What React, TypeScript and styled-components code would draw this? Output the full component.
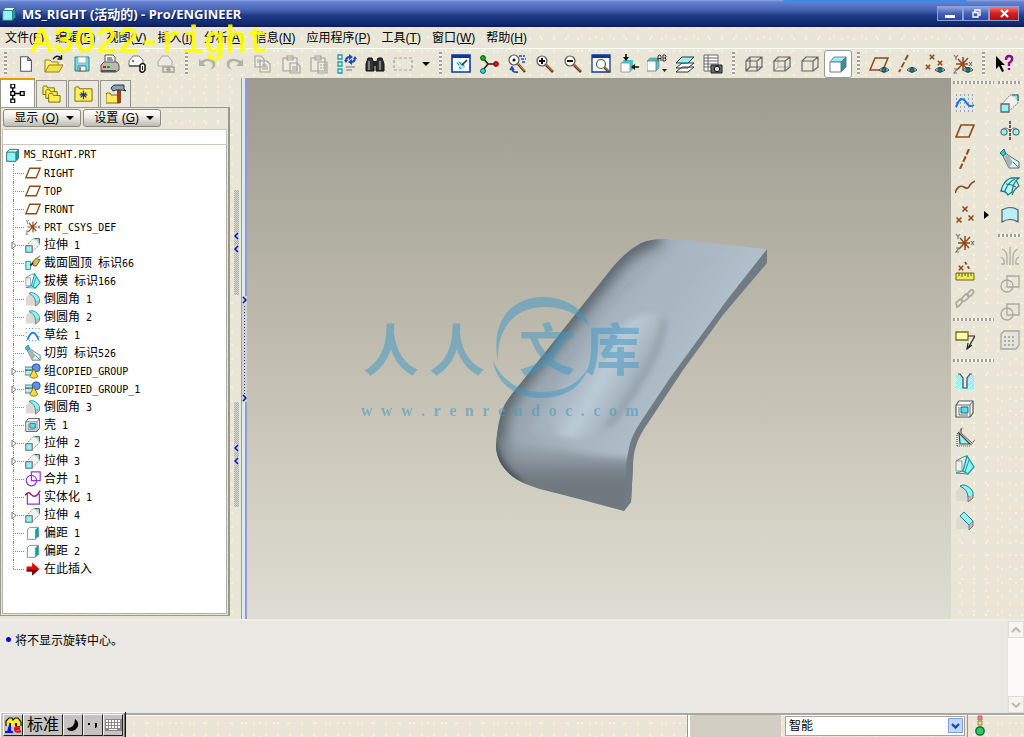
import React from 'react';
import styled, { createGlobalStyle, css } from 'styled-components';

const ui = '"Liberation Sans", "Noto Sans CJK SC", sans-serif';

const GlobalStyle = createGlobalStyle`
  *, *::before, *::after { box-sizing: border-box; }
  body { margin: 0; background: #e9e6d7; font-family: ${ui}; font-size: 12px; color: #000; overflow: hidden; }
  button, select { font: inherit; color: inherit; padding: 0; margin: 0; border: 0; background: none; }
  ul { list-style: none; margin: 0; padding: 0; }
  h1 { margin: 0; }
`;

const speckle = css`
  background-color: #e9e6d7;
  background-image:
    radial-gradient(circle at 2px 3px, #f7f4d4 0, #f7f4d4 1px, transparent 1px),
    radial-gradient(circle at 8px 9px, #f4f1d6 0, #f4f1d6 1px, transparent 1px);
  background-size: 12px 12px, 14px 14px;
`;

/* ---------- icon drawings, on a 20 x 20 grid ---------- */

const brown = '#8f4a1c';
const cyan = '#8ff4fa';
const teal = '#1d9aa3';
const grey = '#666';

const Eye = () => (
  <g>
    <path d="M10 16Q15 11 20 16Q15 20 10 16Z" fill="#eee" stroke="#444" />
    <circle cx="15" cy="16" r="2.3" fill="#127f87" stroke="#134" strokeWidth=".8" />
  </g>
);
const Lens = ({ x = 7, y = 7, r = 5 }) => (
  <g>
    <path d={`M${x + r - 1} ${y + r - 1}L18 18`} stroke="#6b3a1a" strokeWidth="2.6" />
    <path d={`M${x + r - 1} ${y + r - 1.5}L17.5 17`} stroke="#c79a6a" strokeWidth="1" />
    <circle cx={x} cy={y} r={r} fill="#f8f8f4" stroke="#555" strokeWidth="1.2" />
  </g>
);
const Crosses = ({ pts, s = 2.2 }: { pts: number[][]; s?: number }) => (
  <path
    d={pts.map(([x, y]) => `M${x - s} ${y - s}L${x + s} ${y + s}M${x + s} ${y - s}L${x - s} ${y + s}`).join('')}
    stroke={brown}
    strokeWidth="1.6"
  />
);
const Folder = ({ x = 0, y = 0, w = 12, h = 9 }) => (
  <path d={`M${x} ${y + h}V${y + 1}L${x + 1} ${y}H${x + 4}L${x + 5} ${y + 2}H${x + w}V${y + h}Z`} fill="#ffee55" stroke="#7a6a10" />
);
const csys = (
  <>
    <path d="M10 3V17M3 10H15M4 16L15 4M5 5L14 15" stroke={brown} strokeWidth="1.5" />
    <path d="M1 1L3 3.5L5 1M3 3.5V6M16 8L19 12M19 8L16 12M1 15H4L1 19H4" stroke="#777" strokeWidth="1.2" />
  </>
);

const icons: Record<string, React.ReactNode> = {
  newFile: <path d="M4 2H12L16 6V18H4ZM12 2V6H16" fill="#fff" stroke="#556" strokeWidth="1.2" />,
  open: (
    <>
      <path d="M1 18V6H6L8 8H14V11" fill="#fff27a" stroke="#94801b" />
      <path d="M1 18L5 11H19L15 18Z" fill="#f3e04b" stroke="#94801b" />
      <path d="M9 5Q13 0 17 4M17.5 1V5H13.5" stroke="#111" strokeWidth="1.4" fill="none" />
    </>
  ),
  save: (
    <>
      <path d="M3 3H17V17H3Z" fill="#6fdbe6" stroke="#2a7f93" />
      <path d="M6 3H14V9H6Z" fill="#fff" stroke="#9bb" />
      <path d="M6 12H14V17H6Z" fill="#f4f4f4" stroke="#577" />
      <path d="M8 13V17" stroke="#577" strokeWidth="1.6" />
    </>
  ),
  print: (
    <>
      <path d="M5 9V1H13L15 3V9" fill="#fff" stroke="#555" />
      <path d="M7 4H12M7 6H13" stroke="#333" />
      <path d="M1 11L4 8H17L19 11V16L16 18H1Z" fill="#b9b9b5" stroke="#555" />
      <path d="M3 13H6" stroke="#d11" strokeWidth="2" />
      <path d="M7 13H10" stroke="#0a0" strokeWidth="2" />
      <path d="M1 16H16V18H1Z" fill="#555" />
    </>
  ),
  mailAttach: (
    <>
      <path d="M1 7L5 2H11L15 6V12H1Z" fill="#fff" stroke="#777" />
      <path d="M1 12H12" stroke="#555" strokeWidth="1.5" />
      <path d="M4 7H6" stroke="#d11" strokeWidth="1.5" />
      <path d="M12 11Q15 8 17 11V16Q15 20 12 17Z" fill="#fff" stroke="#111" strokeWidth="1.5" />
      <path d="M14.500 12V16" stroke="#111" />
    </>
  ),
  mailLink: (
    <>
      <path d="M2 8L6 2H12L16 7V12H2Z" fill="#eceadf" stroke="#aaa" />
      <path d="M7 13H12V18H7ZM13 13H18V18H13ZM10 15.5H15" fill="none" stroke="#a5a49c" strokeWidth="1.5" />
    </>
  ),
  undo: <path d="M2 5V12H9L6 9Q12 5 15 9Q17 12 13 16Q20 13 18 8Q14 2 4 7Z" fill="#b3b1a6" />,
  redo: <path d="M18 5V12H11L14 9Q8 5 5 9Q3 12 7 16Q0 13 2 8Q6 2 16 7Z" fill="#b3b1a6" />,
  copy: (
    <path d="M2 2H8L11 5V13H2ZM7 7H14L17 10V18H7ZM4 6H8M4 8H7M9 11H14M9 13H15M9 15H15" fill="#edeadf" stroke="#a3a198" strokeWidth="1.1" />
  ),
  paste: (
    <path d="M2 4H16V17H2ZM6 2H12V6H6ZM9 9H16L19 12V19H9ZM11 13H16M11 15H17M11 17H17" fill="#edeadf" stroke="#a3a198" strokeWidth="1.1" />
  ),
  pasteSpecial: (
    <path d="M2 4H16V17H2ZM6 2H12V6H6ZM9 8H18V19H9ZM11 11H13M11 14H13M11 17H13M14 11H17M14 14H17M14 17H17" fill="#edeadf" stroke="#a3a198" strokeWidth="1.1" />
  ),
  regenerate: (
    <>
      <path d="M1 1H5V5H1ZM1 8H5V12H1ZM1 15H5V19H1Z" fill="#dff" stroke={teal} strokeWidth="1.3" />
      <path d="M9 7Q9 3 13 3M18 4Q18 8 14 8" fill="none" stroke="#1f49b8" strokeWidth="2.2" />
      <path d="M12 0L16 3L12 6ZM15 5L11 8L15 11ZM7 6H11L9 9ZM16 5H20L18 2Z" fill="#1f49b8" />
      <path d="M9 13H18M9 16H15" stroke="#777" />
    </>
  ),
  find: (
    <>
      <path d="M3 4H7L9 10V17H1V10ZM13 4H17L19 10V17H11V10Z" fill="#333" stroke="#111" />
      <path d="M8 7H12V12H8Z" fill="#222" />
      <path d="M4 7V16M15 7V16" stroke="#aaa" strokeWidth="1.3" />
    </>
  ),
  selectBox: <path d="M1 4H19V16H1Z" fill="none" stroke="#a5a39a" strokeWidth="1.2" strokeDasharray="3 2" />,
  repaint: (
    <>
      <path d="M1 1H19V18H1Z" fill="#fff" stroke="#0a3a9a" strokeWidth="1.6" />
      <path d="M1 1H19V4H1Z" fill="#0a3a9a" />
      <path d="M4 8Q11 5 15 13L8 17Q9 11 4 8Z" fill="#a8e2f5" />
      <path d="M6 9L8 11M8 8L11 11M8 13L10 15M11 9L13 12" stroke="#1c84b8" />
      <path d="M16 6L11 11" stroke="#333" strokeWidth="1.6" />
    </>
  ),
  spinCenter: (
    <>
      <path d="M4 4L9 10L4 16M9 10H17" fill="none" stroke="#222" strokeWidth="1.6" />
      <circle cx="4" cy="4" r="2.4" fill="#1b1" stroke="#050" />
      <circle cx="4" cy="17" r="2.4" fill="#3de" stroke="#055" />
      <circle cx="17" cy="10" r="2.4" fill="#e11" stroke="#700" />
    </>
  ),
  orientMode: (
    <>
      <path d="M12 2H18M14 5H19M15 8H19" stroke="#1f49b8" strokeWidth="1.4" strokeDasharray="3 1" />
      <Lens x={7} y={6} r={5} />
      <circle cx="7" cy="6" r="1.5" fill="#111" />
      <path d="M5 14Q5 19 11 18M3 16L5 13L7 16" stroke="#1f49b8" strokeWidth="1.6" fill="none" />
    </>
  ),
  zoomIn: (
    <>
      <Lens />
      <path d="M4 7H10M7 4V10" stroke="#111" strokeWidth="2" />
    </>
  ),
  zoomOut: (
    <>
      <Lens />
      <path d="M4 7H10" stroke="#111" strokeWidth="2" />
    </>
  ),
  refit: (
    <>
      <path d="M1 1H19V18H1Z" fill="#fff" stroke="#0a3a9a" strokeWidth="1.3" />
      <path d="M1 1H19V4H1Z" fill="#0a3a9a" />
      <Lens x={10} y={10} r={4.5} />
    </>
  ),
  reorient: (
    <>
      <path d="M2 9L5 6H14L11 9ZM11 9L14 6V15L11 18Z" fill="#35c6cf" />
      <path d="M2 9H11V18H2Z" fill="#fff" stroke="#999" />
      <path d="M7 0V5M20 13H15" stroke="#111" strokeWidth="1.6" />
      <path d="M4 3H10L7 7ZM16 10V16L12 13Z" fill="#111" />
    </>
  ),
  savedViews: (
    <>
      <path d="M0 7L3 4H12L9 7ZM9 7L12 4V14L9 17Z" fill="#35c6cf" stroke="#888" strokeWidth=".6" />
      <path d="M0 7H9V17H0Z" fill="#fff" stroke="#888" />
      <path d="M11 7V2L12 1H13L14 2V7M11 4.500H14M16 1V7H18L19 6V5L18 4L19 3V2L18 1ZM16 4H18" fill="none" stroke="#333" />
      <path d="M15 15H20L17.500 18Z" fill="#222" />
    </>
  ),
  layers: (
    <>
      <path d="M1 18L7 13H19L13 18ZM1 14L7 9H19L13 14Z" fill="#fff" stroke="#333" />
      <path d="M1 9L7 3H19L13 9Z" fill={cyan} stroke="#333" />
    </>
  ),
  viewManager: (
    <>
      <path d="M1 1H15V17H1ZM1 4H15M1 7H15M1 10H15M1 13H15M5 1V17" fill="#fff" stroke="#666" />
      <path d="M8 11H19V19H8Z" fill="#666" stroke="#222" />
      <circle cx="14" cy="15" r="2.7" fill="#ddd" stroke="#111" />
    </>
  ),
  wireframe: (
    <path d="M2 7H13V17H2ZM6 3H18V13H6ZM2 7L6 3M13 7L18 3M2 17L6 13M13 17L18 13" fill="none" stroke={grey} strokeWidth="1.2" />
  ),
  hiddenLine: (
    <>
      <path d="M6 3V13H18M6 13L2 17" fill="none" stroke="#aaa" />
      <path d="M2 7H13V17H2ZM2 7L6 3H18V13L13 17M13 7L18 3" fill="none" stroke={grey} strokeWidth="1.2" />
    </>
  ),
  noHidden: <path d="M2 7H13V17H2ZM2 7L6 3H18V13L13 17M13 7L18 3" fill="none" stroke={grey} strokeWidth="1.2" />,
  shaded: (
    <>
      <path d="M2 8L6 3H18L13 8Z" fill={cyan} stroke="#888" />
      <path d="M13 8L18 3V13L13 18Z" fill={teal} stroke="#777" />
      <path d="M2 8H13V18H2Z" fill="#fff" stroke="#777" />
    </>
  ),
  planeShow: (
    <>
      <path d="M6 4H19L14 16H1Z" fill="none" stroke={brown} strokeWidth="1.5" />
      <Eye />
    </>
  ),
  axisShow: (
    <>
      <path d="M11 1L2 18" stroke={brown} strokeWidth="1.9" strokeDasharray="6 2" />
      <Eye />
    </>
  ),
  pointShow: (
    <>
      <Crosses pts={[[7, 3], [3, 13], [15, 9]]} />
      <Eye />
    </>
  ),
  csysShow: (
    <>
      {csys}
      <Eye />
    </>
  ),
  help: (
    <>
      <path d="M2 2V15L5 12L8 18L10 17L7 11H11Z" fill="#000" />
      <path d="M12 6Q12 2 15 2Q19 2 18 6Q17 8 15 9V12M15 14V16" stroke="#850c8c" strokeWidth="2.4" fill="none" />
    </>
  ),
  sketch: (
    <>
      <path d="M1 2H19M1 6H19M1 10H19M1 14H19M1 18H19" stroke="#2363cf" strokeWidth="1" strokeDasharray="1 3" />
      <path d="M1 14Q6 1 11 9Q14 15 19 12" fill="none" stroke="#0a78e6" strokeWidth="2" />
    </>
  ),
  curveSketch: (
    <>
      <path d="M1 2H19M1 7H4M16 7H19M1 12H3M17 12H19M1 17H19" stroke="#2363cf" strokeWidth="1.2" strokeDasharray="1 3" />
      <path d="M3 16Q10 -2 17 16" fill="none" stroke="#0a78e6" strokeWidth="2" />
    </>
  ),
  plane: <path d="M6 4H19L14 16H1Z" fill="none" stroke={brown} strokeWidth="1.7" />,
  axis: <path d="M14 0L5 20" stroke={brown} strokeWidth="2" strokeDasharray="6 2" />,
  curve: <path d="M0 16Q3 7 9 10Q13 13 15 8Q17 5 20 4" fill="none" stroke={brown} strokeWidth="1.7" />,
  points: <Crosses pts={[[10, 4], [4, 15], [16, 13]]} s={2.5} />,
  csys,
  analysis: (
    <>
      <Crosses pts={[[6, 7]]} />
      <path d="M10 1L15 9" stroke={brown} strokeWidth="1.8" strokeDasharray="3 2" />
      <path d="M1 12H19V19H1Z" fill="#f5e94e" stroke="#6f6510" />
      <path d="M4 12V15M7 12V16M10 12V15M13 12V16M16 12V15" stroke="#555" />
    </>
  ),
  link: (
    <path d="M2 18L1 14L5 10L8 12L4 17ZM7 12L7 9L11 5L14 8L10 12ZM13 7L13 4L17 0L19 3L16 7Z" fill="none" stroke="#aaa89c" strokeWidth="1.7" />
  ),
  annotation: (
    <>
      <path d="M1 2H13V10H1Z" fill="#ffffb5" stroke="#77700e" strokeWidth="1.3" />
      <path d="M13 6H20L13 18M17 15L12 19L13 13" fill="none" stroke="#222" strokeWidth="1.2" />
    </>
  ),
  hole: (
    <>
      <path d="M1 4H5L8 8V17H12V8L15 4H19V18H1Z" fill={cyan} />
      <path d="M7 3H13L12 8V17H8V8Z" fill="#eceade" />
      <path d="M1 10L5 6M1 15L7 9M3 18L7 14M13 17L19 11M13 12L19 6" stroke="#fff" />
      <path d="M3 3H5L8 7V17H12V7L15 3H17" fill="none" stroke="#446" strokeWidth="1.2" />
    </>
  ),
  shell: (
    <>
      <path d="M1 6L4 2H18V14L15 18H1Z" fill="#fff" stroke="#555" strokeWidth="1.2" />
      <path d="M1 6H15V18M15 6L18 2M4 8V16H13" fill="none" stroke="#666" />
      <path d="M6 8H13V14H6Z" fill="#56dfe9" stroke="#167" />
    </>
  ),
  rib: (
    <>
      <path d="M2 19V7L8 1M2 19H15L20 13" fill="none" stroke="#555" strokeDasharray="1 1" strokeWidth="1.2" />
      <path d="M4 6L15 17H5Z" fill={cyan} stroke="#444" strokeWidth="1.2" />
      <path d="M6 1V6L17 16" fill="none" stroke="#555" />
    </>
  ),
  draft: (
    <>
      <path d="M1 6H7V16H1Z" fill="#eee" stroke="#999" />
      <path d="M8 16L12 1L19 12L13 19Z" fill={cyan} stroke={teal} strokeWidth="1.3" />
      <path d="M12 1L8 2L1 6M8 16L1 18L13 19M14 5L10 17" fill="none" stroke={teal} />
    </>
  ),
  round: (
    <>
      <path d="M1 8L6 3Q13 3 18 12L13 18H1Z" fill="#dcdad0" />
      <path d="M5 3Q10 0 16 6Q19 9 18 13L13 14Q13 7 5 3Z" fill={cyan} stroke="#267f86" />
      <path d="M13 14V19L18 15V12" fill="#bbb" stroke="#777" />
    </>
  ),
  chamfer: (
    <>
      <path d="M1 8L6 3L18 12L13 18H1Z" fill="#dcdad0" />
      <path d="M5 5L9 1L18 10L14 14Z" fill={cyan} stroke="#267f86" />
      <path d="M14 14V19L18 15V10" fill="#bbb" stroke="#777" />
    </>
  ),
  extrude: (
    <>
      <path d="M2 11L10 2H18V10L9 18" fill="#f2f1ea" stroke="#777" strokeDasharray="2 1" />
      <path d="M10 2H18V10L15 5Z" fill="#9be3e6" />
      <path d="M12 2H18V8" stroke="#456" strokeWidth="1.200" />
      <path d="M1 11H9V19H1Z" fill={cyan} stroke="#666" strokeWidth="1.300" />
    </>
  ),
  revolve: (
    <>
      <path d="M10 0V20" stroke="#111" strokeWidth="1.3" strokeDasharray="3 1" />
      <path d="M2 9Q6 5 9 9M11 9Q14 5 18 9" fill="none" stroke="#777" />
      <circle cx="4" cy="11" r="3.200" fill={cyan} stroke="#555" />
      <circle cx="16" cy="11" r="3.200" fill={cyan} stroke="#555" />
    </>
  ),
  blendCut: (
    <>
      <path d="M5 4L11 8L19 13V19H9L3 7Z" fill="#d5f8fa" stroke="#666" />
      <path d="M9 19L4 7L8 6L13 13Z" fill="#a9b4b4" />
      <path d="M13 13L19 19" stroke="#666" />
      <path d="M0 4L4 0L6 5L3 7Z" fill="#3fc3cb" stroke="#177" />
    </>
  ),
  boundary: (
    <>
      <path d="M1 14Q3 4 11 1H19Q13 5 12 15L8 18Q6 14 1 14Z" fill="#b9f5f8" stroke="#167c86" strokeWidth="1.3" />
      <path d="M6 7Q11 7 16 10M5 14Q8 5 15 2M16 3L19 9Q14 12 12 18" fill="none" stroke="#167c86" strokeWidth="1.2" />
    </>
  ),
  surfaceFill: <path d="M2 5Q10 0 18 5V17Q10 12 2 17Z" fill="#b9eff5" stroke="#556" strokeWidth="1.2" />,
  mirror: (
    <path d="M10 1V19M7 19V11Q7 5 2 3M13 19V11Q13 5 18 3M1 18H4Q5 13 1 11M19 18H16Q15 13 19 11" fill="none" stroke="#b1afa4" strokeWidth="1.300" />
  ),
  mergeOff: (
    <>
      <circle cx="7" cy="12" r="6" fill="none" stroke="#aba99e" strokeWidth="1.3" />
      <path d="M7 2H19V13H7Z" fill="none" stroke="#aba99e" strokeWidth="1.3" />
    </>
  ),
  pattern: (
    <>
      <path d="M1 4L4 1H19V15L16 19H1Z" fill="#e6e4da" stroke="#aaa89d" strokeWidth="1.3" />
      <path d="M4 7H15M4 11H15M4 15H15" stroke="#999" strokeWidth="1.6" strokeDasharray="2 2" />
    </>
  ),
  part: (
    <>
      <path d="M1 6L5 2H18V15L14 19H1Z" fill={teal} stroke="#366" />
      <path d="M1 6L5 2H18L14 6Z" fill="#d9ffff" stroke="#366" />
      <path d="M1 6H14V19H1Z" fill={cyan} stroke="#366" />
    </>
  ),
  dome: (
    <>
      <path d="M1 8H7V18H1Z" fill="#9ff" stroke="#366" />
      <path d="M7 13L13 7" stroke="#111" strokeWidth="2" />
      <path d="M10 8L14 4L19 6L14 14L10 13Z" fill="#d8b85c" stroke="#554010" />
      <path d="M14 5L19 1" stroke="#887" strokeWidth="1.500" />
    </>
  ),
  group: (
    <>
      <path d="M0 5H13V15H0Z" fill="#a9f2f5" stroke="#555" />
      <path d="M0 9H10L14 5" fill="none" stroke="#555" strokeWidth="1.5" />
      <circle cx="14" cy="6" r="5" fill="#5a94ea" stroke="#1e3e95" />
      <path d="M11 7L16 17Q11 21 6 17Z" fill="#f5dc3e" stroke="#6e5c0e" />
    </>
  ),
  merge: (
    <>
      <circle cx="8" cy="12" r="6.500" fill="#fff" stroke="#9632e0" strokeWidth="1.5" />
      <path d="M8 1H19V12H8Z" fill="none" stroke="#9632e0" strokeWidth="1.5" />
    </>
  ),
  solidify: (
    <>
      <path d="M3 6V19H18V6" fill="none" stroke="#9632e0" strokeWidth="1.6" />
      <path d="M0 8Q4 2 8 7Q13 13 19 2" fill="none" stroke="#8b1b86" strokeWidth="1.8" />
    </>
  ),
  offset: (
    <>
      <path d="M13 6L17 3V14L13 18Z" fill={teal} />
      <path d="M3 6L6 3H17L13 6V18H3Z" fill="#f4ffff" stroke="#777" />
      <path d="M16 4V15" stroke={teal} strokeWidth="2" />
    </>
  ),
  insert: (
    <>
      <path d="M2 7H9V2L18 10L9 18V13H2Z" fill="#e60000" />
      <path d="M2 11H17L9 18V13H2Z" fill="#6d0000" />
    </>
  ),
  tree: (
    <path d="M3 0H7V4H3ZM3 8H7V12H3ZM3 16H7V20H3ZM13 8H17V12H13ZM5 4V8M5 12V16M7 10H13" fill="#fff" stroke="#000" strokeWidth="1.4" />
  ),
  folders: (
    <>
      <Folder x={1} y={1} />
      <Folder x={4} y={5} />
      <Folder x={7} y={9} />
    </>
  ),
  favorites: (
    <>
      <Folder x={1} y={2} w={18} h={15} />
      <path d="M10 6V15M6 10.500H14M7 8L13 13M13 8L7 13" stroke="#123a9e" strokeWidth="1.3" />
    </>
  ),
  tools: (
    <>
      <Folder x={0} y={9} w={14} h={10} />
      <path d="M13 5V19" stroke="#96402a" strokeWidth="4" />
      <path d="M5 4Q7 0 11 1H18V5L20 7L16 6H10L7 7Z" fill="#8aa3ae" stroke="#234" />
    </>
  ),
};

const Drawing = styled.svg<{ $size: number }>`
  display: block;
  flex: none;
  width: ${(p) => p.$size}px;
  height: ${(p) => p.$size}px;
`;
const Icon = ({ name, size = 18 }: { name: string; size?: number }) => (
  <Drawing $size={size} viewBox="0 0 20 20" fill="none" aria-hidden="true">
    {icons[name]}
  </Drawing>
);

/* ---------- window frame ---------- */

const Window = styled.div`
  display: flex;
  flex-direction: column;
  min-height: 100vh;
  ${speckle}
`;
const TitleBar = styled.header`
  position: relative;
  display: flex;
  align-items: center;
  gap: 5px;
  height: 27px;
  padding: 0 5px 0 2px;
  background: linear-gradient(#8ba3e2 0, #6380cf 2px, #4c67b8 9px, #1d3a86 16px, #11296b 24px, #0d1e52);
`;
const Title = styled.h1`
  flex: 1;
  font: bold 13px/18px "Open Sans", "Noto Sans CJK SC", sans-serif;
  color: #fff;
  white-space: nowrap;
  text-shadow: 1px 1px #0b1c50;
`;
const DockedTab = styled.span`
  position: absolute;
  top: 0;
  right: 57px;
  width: 184px;
  height: 2px;
  border-radius: 0 0 4px 4px;
  background: #2f92e8;
`;
const WindowButtons = styled.div`
  display: flex;
`;
const WindowButton = styled.button<{ $close?: boolean }>`
  display: grid;
  place-items: center;
  width: ${(p) => (p.$close ? 30 : 26)}px;
  height: 15px;
  border: 1px solid #8ba0d8;
  background: ${(p) =>
    p.$close ? 'linear-gradient(#ef7b70, #d51e1e 50%, #b00d10)' : 'linear-gradient(#8fa4dc, #4561b4 50%, #2a4799)'};
`;

const MenuBar = styled.nav`
  display: flex;
  gap: 11px;
  height: 22px;
  padding: 0 5px;
  border-bottom: 1px solid #fff;
`;
const MenuButton = styled.button`
  line-height: 20px;
  white-space: nowrap;
`;
const Caption = styled.div`
  position: absolute;
  z-index: 2;
  top: 23px;
  left: 31px;
  font: 36px/40px "Liberation Mono", monospace;
  color: #ffff00;
  opacity: 0.9;
  -webkit-text-stroke: 1px #ffff00;
  pointer-events: none;
`;

const Toolbar = styled.div`
  display: flex;
  align-items: center;
  height: 29px;
  padding-left: 4px;
`;
const Grip = styled.span`
  flex: none;
  width: 3px;
  height: 23px;
  margin: 0 5px;
  background: repeating-linear-gradient(#a3a197 0 2px, #f6f5ee 2px 4px);
  &:first-child { margin-left: 0; }
`;
const ToolButton = styled.button<{ $pressed?: boolean; $narrow?: boolean }>`
  display: grid;
  place-items: center;
  flex: none;
  width: ${(p) => (p.$narrow ? 17 : 28)}px;
  height: 28px;
  ${(p) => p.$pressed && 'background: #fff; border: 1px solid #9d9c94; border-radius: 3px;'}
`;

/* ---------- model tree side ---------- */

const Body = styled.div`
  display: flex;
  flex: 1;
  min-height: 540px;
`;
const Navigator = styled.aside`
  display: flex;
  flex-direction: column;
  flex: none;
  width: 230px;
  padding-bottom: 3px;
`;
const Tabs = styled.div`
  display: flex;
  align-items: flex-end;
  gap: 1px;
  height: 29px;
`;
const Tab = styled.button<{ $active?: boolean }>`
  display: grid;
  place-items: center;
  width: ${(p) => (p.$active ? 35 : 31)}px;
  height: ${(p) => (p.$active ? 29 : 27)}px;
  border: 1px solid #98968c;
  border-top: ${(p) => (p.$active ? '2px solid #e2a000' : '1px solid #98968c')};
  border-bottom: 0;
  background: ${(p) => (p.$active ? '#fff' : '#ebe9df')};
`;
const TreePanel = styled.section`
  display: flex;
  flex-direction: column;
  flex: 1;
  padding: 1px;
  border: 1px solid #9a988e;
  border-right-width: 2px;
`;
const PanelActions = styled.div`
  display: flex;
  gap: 2px;
  height: 20px;
  padding-left: 1px;
`;
const DropButton = styled.button`
  display: flex;
  align-items: center;
  justify-content: flex-end;
  gap: 7px;
  width: 78px;
  height: 18px;
  padding-right: 6px;
  border: 1px solid #8c8a80;
  border-radius: 3px;
  background: linear-gradient(#fff, #efede6 40%, #bdbbb2);
  line-height: 16px;
`;
const SearchBox = styled.input`
  display: block;
  width: 100%;
  height: 16px;
  border: 1px solid #c9c7bc;
  background: #fff;
`;
const Tree = styled.ul`
  flex: 1;
  padding: 1px 0 0 1px;
  background: #fff;
  border: 1px solid #b3b1a8;
  border-top: 0;
`;
const Row = styled.li<{ $root?: boolean }>`
  display: flex;
  align-items: center;
  gap: ${(p) => (p.$root ? 4 : 3)}px;
  height: 18px;
  padding-left: ${(p) => (p.$root ? 2 : 9)}px;
  white-space: pre;
  line-height: 18px;
`;
const Branch = styled.span<{ $last?: boolean }>`
  position: relative;
  width: 11px;
  height: 18px;
  margin-right: -2px;
  &::before {
    content: '';
    position: absolute;
    inset: 0 auto ${(p) => (p.$last ? '9px' : '0')} 0;
    border-left: 1px dotted #888;
  }
  &::after {
    content: '';
    position: absolute;
    inset: 9px 0 auto 0;
    border-top: 1px dotted #888;
  }
`;
const Expander = styled.svg`
  position: absolute;
  z-index: 1;
  top: 5px;
  left: -2px;
  width: 6px;
  height: 9px;
`;
const Latin = styled.span`
  font: 10px/18px "DejaVu Sans Mono", monospace;
`;

const Sash = styled.div`
  display: flex;
  flex-direction: column;
  align-items: center;
  justify-content: center;
  gap: 107px;
  flex: none;
  width: 11px;
  padding: 0 0 0 2px;
`;
const SashGrip = styled.button`
  display: grid;
  place-content: center;
  gap: 5px;
  width: 5px;
  height: 105px;
  background: repeating-conic-gradient(#aaa9a2 0 25%, #dedcd2 0 50%) 0 0 / 2px 2px;
`;
const Divider = styled.div`
  display: flex;
  align-items: center;
  flex: none;
  width: 6px;
  border: solid #8e9bd6;
  border-width: 0 2px 0 1px;
  background: #e5e5ec;
`;
const DividerGrip = styled.button`
  display: flex;
  flex-direction: column;
  justify-content: space-between;
  width: 5px;
  height: 106px;
  background: radial-gradient(circle at 50% 50%, #2b3cae 0, #2b3cae 1px, #d4d2cc 1px) 0 0 / 5px 3px;
`;
const Chevron = ({ d = 'M4 1L1 4L4 7' }) => (
  <svg width="5" height="8" viewBox="0 0 5 8" aria-hidden="true">
    <path d="M0 0H5V8H0Z" fill="#d4d2cc" />
    <path d={d} fill="none" stroke="#0011bb" strokeWidth="1.5" />
  </svg>
);

/* ---------- graphics area ---------- */

const Graphics = styled.main`
  flex: 1;
  min-width: 0;
  display: grid;
  background: linear-gradient(#9d9b90, #b0ada1 27%, #c5c2b5 58%, #d3d1c4 80%, #dfddd3);
`;
const Scene = styled.svg`
  grid-area: 1 / 1;
  width: 100%;
  height: 100%;
`;
const SiteAddress = styled.div`
  grid-area: 1 / 1;
  align-self: center;
  justify-self: center;
  display: flex;
  justify-content: space-between;
  width: 278px;
  margin: 124px 198px 0 0;
  font: bold 16px/18px "Liberation Serif", serif;
  color: #4b9cc1;
  opacity: 0.6;
`;

const body =
  'M496 445Q498 417 505 404Q511 394 520 384L612 268Q626 251 641 243Q650 239 664 239L687 240L767 249V263L723 315L683 370L650 420Q638 437 636 446Q633 455 633 466L631 502L624 511L583 500L540 489Q520 483 512 476Q496 463 496 445Z';

const Model = () => (
  <Scene viewBox="247 78 704 541" aria-label="MS_RIGHT">
    <defs>
      <clipPath id="body"><path d={body} /></clipPath>
      <linearGradient id="top" gradientUnits="userSpaceOnUse" x1="560" y1="330" x2="680" y2="400">
        <stop offset="0" stopColor="#98a5af" />
        <stop offset=".4" stopColor="#a5b2bd" />
        <stop offset="1" stopColor="#b1c0cc" />
      </linearGradient>
      <linearGradient id="front" x1="0" y1="0" x2="0" y2="1">
        <stop offset="0" stopColor="#98a5af" stopOpacity="0" />
        <stop offset=".45" stopColor="#7c868e" />
        <stop offset=".6" stopColor="#70797f" />
      </linearGradient>
      <linearGradient id="bulge" gradientUnits="userSpaceOnUse" x1="585" y1="370" x2="640" y2="402">
        <stop offset="0" stopColor="#abb9c4" />
        <stop offset=".3" stopColor="#bbcbd6" />
        <stop offset=".65" stopColor="#a9b7c1" />
        <stop offset="1" stopColor="#909da7" />
      </linearGradient>
      <filter id="soft"><feGaussianBlur stdDeviation="7" /></filter>
      <filter id="fine"><feGaussianBlur stdDeviation="3" /></filter>
    </defs>
    <g clipPath="url(#body)">
      <path d={body} fill="url(#top)" />
      <path d="M687 236L725 240L640 330L560 440L530 430L600 320Z" fill="#a9b7c1" opacity=".6" filter="url(#fine)" />
      <path d="M512 478Q488 454 500 412Q506 396 518 382L612 266Q632 242 660 236" fill="none" stroke="#566168" strokeWidth="18" filter="url(#soft)" />
      <path d="M480 428Q520 446 560 449Q600 458 640 458V520H480Z" fill="url(#front)" filter="url(#fine)" />
      <path d="M494 436Q500 466 524 482L500 496L480 440Z" fill="#434d55" filter="url(#fine)" />
      <path d="M552 424C548 400 575 374 610 335C630 316 654 310 663 315C672 326 650 370 622 412C612 430 598 436 582 438C564 440 554 434 552 424Z" fill="url(#bulge)" filter="url(#fine)" />
      <path d="M664 318Q664 350 627 402Q618 417 608 425" fill="none" stroke="#84919b" strokeWidth="3" opacity=".8" filter="url(#fine)" />
    </g>
    <path d="M767 249L727 300L670 378L642 420Q631 436 629 448Q626 460 626 472L624 511L631 502L633 466Q633 455 636 446Q638 437 650 420L683 370L723 315L767 263Z" fill="#717b84" />
    <g fill="#3d98c5" opacity=".5">
      <path d="M498 361C490 322 511 297 543 297C566 297 584 309 590 327C577 313 563 307 545 307C516 307 497 326 498 361Z" />
      <path d="M493 361C502 380 518 392 543 392C564 392 579 383 588 368C582 386 566 398 542 398C516 398 497 384 493 361Z" />
      <g fontFamily="'Noto Sans CJK SC', sans-serif" fontWeight="bold" fontSize="56" textAnchor="middle">
        <text x="391" y="371">人</text>
        <text x="457" y="371">人</text>
        <text x="547" y="370">文</text>
        <text x="613" y="370">库</text>
      </g>
    </g>
  </Scene>
);

/* ---------- feature tools ---------- */

const FeatureTools = styled.aside`
  display: flex;
  flex: none;
`;
const ToolColumn = styled.div<{ $wide?: boolean }>`
  display: flex;
  flex-direction: column;
  width: ${(p) => (p.$wide ? 45 : 28)}px;
  padding-top: 3px;
`;
const ColumnGrip = styled.span`
  flex: none;
  height: 3px;
  margin: 5px 2px;
  background: repeating-linear-gradient(90deg, #a3a197 0 2px, #f6f5ee 2px 4px);
  &:first-child { margin-top: 0; }
`;
const FlyoutRow = styled.div`
  display: flex;
  align-items: center;
  gap: 5px;
`;

/* ---------- messages and status ---------- */

const Messages = styled.section`
  display: flex;
  justify-content: space-between;
  flex: none;
  height: 94px;
  border-top: 2px solid #f0eee4;
  background: #ebe8e3;
`;
const Message = styled.p`
  display: flex;
  align-items: center;
  gap: 4px;
  height: 18px;
  margin: 9px 0 0 6px;
`;
const Bullet = styled.span`
  width: 5px;
  height: 5px;
  border-radius: 50%;
  background: #0000f0;
`;
const ScrollBar = styled.div`
  display: flex;
  flex-direction: column;
  justify-content: space-between;
  width: 17px;
  background: #fbfaf6;
  border-left: 1px solid #e6e4dc;
`;
const ScrollButton = styled.button`
  display: grid;
  place-items: center;
  height: 17px;
  border: 1px solid #e0ded6;
  background: #f5f4ef;
`;
const StatusBar = styled.footer`
  position: relative;
  display: flex;
  justify-content: flex-end;
  flex: none;
  height: 24px;
  border-top: 2px solid #aaa89e;
  box-shadow: inset 0 1px #fff;
`;
const StatusWell = styled.div`
  width: 94px;
  margin-right: 4px;
  border-left: 1px solid #98968c;
  background: linear-gradient(90deg, #fff 2px, #d2cec4 2px);
`;
const FilterSelect = styled.select`
  width: 180px;
  height: 20px;
  margin-top: 1px;
  padding: 0 3px;
  appearance: none;
  border: 1px solid #a5a39a;
  line-height: 18px;
  color: #000;
  background: #fff;
`;
const FilterBox = styled.label`
  position: relative;
  display: flex;
`;
const FilterArrow = styled.svg`
  position: absolute;
  top: 3px;
  right: 2px;
  width: 15px;
  height: 15px;
  pointer-events: none;
`;
const Light = styled.div`
  width: 57px;
  margin-left: 2px;
  padding-left: 5px;
  border-left: 1px solid #98968c;
`;
const InputBar = styled.div`
  position: absolute;
  z-index: 1;
  left: 0;
  bottom: 0;
  display: flex;
  height: 25px;
  padding: 2px 2px 1px 3px;
  border: solid #111;
  border-width: 0 1px 0 0;
  background: #c5c3bf;
  box-shadow: inset 1px 1px #fff, inset -1px 0 #777;
`;
const InputButton = styled.button<{ $wide?: boolean }>`
  display: grid;
  place-items: center;
  width: ${(p) => (p.$wide ? 40 : 20)}px;
  font-size: 16px;
  line-height: 20px;
  border: solid;
  border-width: 1px;
  border-color: #f4f4f4 #222 #222 #f4f4f4;
  background: #c5c3bf;
`;

/* ---------- data ---------- */

const menus = [
  ['文件', 'F'], ['编辑', 'E'], ['视图', 'V'], ['插入', 'I'], ['分析', 'A'],
  ['信息', 'N'], ['应用程序', 'P'], ['工具', 'T'], ['窗口', 'W'], ['帮助', 'H'],
];

const toolGroups = [
  ['newFile', 'open', 'save', 'print', 'mailAttach', 'mailLink'],
  ['undo', 'redo', 'copy', 'paste', 'pasteSpecial', 'regenerate', 'find', 'selectBox', 'more'],
  ['repaint', 'spinCenter', 'orientMode', 'zoomIn', 'zoomOut', 'refit', 'reorient', 'savedViews', 'layers', 'viewManager'],
  ['wireframe', 'hiddenLine', 'noHidden', 'shaded'],
  ['planeShow', 'axisShow', 'pointShow', 'csysShow'],
  ['help'],
];

type Feature = { icon: string; cjk?: string; latin?: string; tail?: string; id?: string; open?: boolean };
const features: Feature[] = [
  { icon: 'plane', latin: 'RIGHT' },
  { icon: 'plane', latin: 'TOP' },
  { icon: 'plane', latin: 'FRONT' },
  { icon: 'csys', latin: 'PRT_CSYS_DEF' },
  { icon: 'extrude', cjk: '拉伸', latin: ' 1', open: true },
  { icon: 'dome', cjk: '截面圆顶', latin: ' ', tail: '标识', id: '66' },
  { icon: 'draft', cjk: '拔模', latin: ' ', tail: '标识', id: '166' },
  { icon: 'round', cjk: '倒圆角', latin: ' 1' },
  { icon: 'round', cjk: '倒圆角', latin: ' 2' },
  { icon: 'curveSketch', cjk: '草绘', latin: ' 1' },
  { icon: 'blendCut', cjk: '切剪', latin: ' ', tail: '标识', id: '526' },
  { icon: 'group', cjk: '组', latin: 'COPIED_GROUP', open: true },
  { icon: 'group', cjk: '组', latin: 'COPIED_GROUP_1', open: true },
  { icon: 'round', cjk: '倒圆角', latin: ' 3' },
  { icon: 'shell', cjk: '壳', latin: ' 1' },
  { icon: 'extrude', cjk: '拉伸', latin: ' 2', open: true },
  { icon: 'extrude', cjk: '拉伸', latin: ' 3', open: true },
  { icon: 'merge', cjk: '合并', latin: ' 1' },
  { icon: 'solidify', cjk: '实体化', latin: ' 1' },
  { icon: 'extrude', cjk: '拉伸', latin: ' 4', open: true },
  { icon: 'offset', cjk: '偏距', latin: ' 1' },
  { icon: 'offset', cjk: '偏距', latin: ' 2' },
  { icon: 'insert', cjk: '在此插入' },
];

const datumTools = ['sketch', 'plane', 'axis', 'curve', 'points', 'csys', 'analysis', 'link', '-', 'annotation', '-', 'hole', 'shell', 'rib', 'draft', 'round', 'chamfer'];
const shapeTools = ['extrude', 'revolve', 'blendCut', 'boundary', 'surfaceFill', '-', 'mirror', 'mergeOff', 'mergeOff', 'pattern'];

const Down = () => (
  <svg width="8" height="4" viewBox="0 0 8 4" aria-hidden="true"><path d="M0 0H8L4 4Z" /></svg>
);

const columnTool = (name: string, i: number) => {
  if (name === '-') return <ColumnGrip key={i} />;
  const button = <ToolButton key={i} aria-label={name}><Icon name={name} size={20} /></ToolButton>;
  if (name !== 'points') return button;
  return (
    <FlyoutRow key={i}>
      {button}
      <svg width="5" height="8" viewBox="0 0 5 8" aria-hidden="true"><path d="M0 0L5 4L0 8Z" /></svg>
    </FlyoutRow>
  );
};

export default function App() {
  return (
    <Window>
      <GlobalStyle />
      <TitleBar>
        <Icon name="part" size={15} />
        <Title>MS_RIGHT (活动的) - Pro/ENGINEER</Title>
        <DockedTab />
        <WindowButtons>
          <WindowButton aria-label="minimize">
            <svg width="10" height="9" viewBox="0 0 10 9"><path d="M0 6H10V9H0Z" fill="#fff" /></svg>
          </WindowButton>
          <WindowButton aria-label="restore">
            <svg width="9" height="9" viewBox="0 0 9 9"><path d="M3 3V1H8V6H6M1 3.500H6V8H1Z" fill="none" stroke="#fff" strokeWidth="1.300" /></svg>
          </WindowButton>
          <WindowButton $close aria-label="close">
            <svg width="9" height="9" viewBox="0 0 9 9"><path d="M1 1L8 8M8 1L1 8" stroke="#fff" strokeWidth="2" /></svg>
          </WindowButton>
        </WindowButtons>
        <Caption>A3022-right</Caption>
      </TitleBar>

      <MenuBar>
        {menus.map(([label, key]) => (
          <MenuButton key={key}>{label}(<u>{key}</u>)</MenuButton>
        ))}
      </MenuBar>

      <Toolbar>
        {toolGroups.map((group, g) => (
          <React.Fragment key={g}>
            <Grip />
            {group.map((name) =>
              name === 'more' ? (
                <ToolButton key={name} $narrow aria-label={name}><Down /></ToolButton>
              ) : (
                <ToolButton key={name} $pressed={name === 'shaded'} aria-label={name}>
                  <Icon name={name} size={name === 'newFile' ? 18 : 20} />
                </ToolButton>
              ),
            )}
          </React.Fragment>
        ))}
      </Toolbar>

      <Body>
        <Navigator>
          <Tabs>
            <Tab $active aria-label="tree"><Icon name="tree" size={19} /></Tab>
            <Tab aria-label="folders"><Icon name="folders" size={19} /></Tab>
            <Tab aria-label="favorites"><Icon name="favorites" size={19} /></Tab>
            <Tab aria-label="tools"><Icon name="tools" size={20} /></Tab>
          </Tabs>
          <TreePanel>
            <PanelActions>
              <DropButton><span>显示 (<u>O</u>)</span><Down /></DropButton>
              <DropButton><span>设置 (<u>G</u>)</span><Down /></DropButton>
            </PanelActions>
            <SearchBox aria-label="search" />
            <Tree>
              <Row $root>
                <Icon name="part" size={14} />
                <Latin>MS_RIGHT.PRT</Latin>
              </Row>
              {features.map((f, i) => (
                <Row key={i}>
                  <Branch $last={i === features.length - 1}>
                    {f.open && (
                      <Expander viewBox="0 0 6 9"><path d="M1 1L5 4.500L1 8Z" fill="#fff" stroke="#777" /></Expander>
                    )}
                  </Branch>
                  <Icon name={f.icon} size={16} />
                  <span>
                    {f.cjk}
                    {f.latin && <Latin>{f.latin}</Latin>}
                    {f.tail}
                    {f.id && <Latin>{f.id}</Latin>}
                  </span>
                </Row>
              ))}
            </Tree>
          </TreePanel>
        </Navigator>
        <Sash>
          <SashGrip aria-label="collapse"><Chevron /><Chevron /></SashGrip>
          <SashGrip aria-label="collapse"><Chevron /><Chevron /></SashGrip>
        </Sash>
        <Divider>
          <DividerGrip aria-label="expand"><Chevron d="M1 1L4 4L1 7" /><Chevron d="M1 1L4 4L1 7" /></DividerGrip>
        </Divider>
        <Graphics>
          <Model />
          <SiteAddress>
            {'www.renrendoc.com'.split('').map((c, i) => <span key={i}>{c}</span>)}
          </SiteAddress>
        </Graphics>
        <FeatureTools>
          <ToolColumn $wide><ColumnGrip />{datumTools.map(columnTool)}</ToolColumn>
          <ToolColumn><ColumnGrip />{shapeTools.map(columnTool)}</ToolColumn>
        </FeatureTools>
      </Body>

      <Messages>
        <Message><Bullet />将不显示旋转中心。</Message>
        <ScrollBar>
          <ScrollButton aria-label="up">
            <svg width="10" height="6" viewBox="0 0 10 6"><path d="M1 5L5 1L9 5" fill="none" stroke="#bbb9b3" strokeWidth="2" /></svg>
          </ScrollButton>
          <ScrollButton aria-label="down">
            <svg width="10" height="6" viewBox="0 0 10 6"><path d="M1 1L5 5L9 1" fill="none" stroke="#bbb9b3" strokeWidth="2" /></svg>
          </ScrollButton>
        </ScrollBar>
      </Messages>

      <StatusBar>
        <InputBar>
          <InputButton aria-label="input method">
            <svg width="18" height="17" viewBox="0 0 18 17">
              <path d="M2 9V4L5 1H8L9 3L11 1H14L17 5V9" fill="#ffee1c" stroke="#111" strokeWidth="1.2" />
              <path d="M6 6V9M12 6V9" stroke="#111" strokeWidth="2" />
              <path d="M1 15H4L6 8V15H9M4 12H7" fill="none" stroke="#1212e0" strokeWidth="2" />
              <path d="M16 10Q10 9 11 13Q12 16 17 14M11 12H16" fill="none" stroke="#e01010" strokeWidth="2" />
            </svg>
          </InputButton>
          <InputButton $wide>标准</InputButton>
          <InputButton aria-label="half width">
            <svg width="12" height="12" viewBox="0 0 12 12"><path d="M8 0Q12 3 11 7Q9 12 4 12Q1 12 0 9Q8 9 8 0Z" /></svg>
          </InputButton>
          <InputButton aria-label="punctuation">
            <svg width="12" height="8" viewBox="0 0 12 8"><path d="M1 2H3V4H1ZM8 2H10V5L9 7H8V5Z" /></svg>
          </InputButton>
          <InputButton aria-label="keyboard">
            <svg width="17" height="12" viewBox="0 0 17 12">
              <path d="M0 0H17V12H0Z" fill="#8a8986" />
              <path d="M1 2H16M1 5H16M1 8H16" stroke="#fff" strokeWidth="2" strokeDasharray="2 1" />
              <path d="M4 10.500H12" stroke="#fff" />
            </svg>
          </InputButton>
        </InputBar>
        <StatusWell />
        <FilterBox>
          <FilterSelect aria-label="filter"><option>智能</option></FilterSelect>
          <FilterArrow viewBox="0 0 15 15">
            <path d="M.5.5H14.500V14.500H.5Z" fill="#c5d5fb" stroke="#7c9be6" />
            <path d="M4 6L7.500 9.500L11 6" fill="none" stroke="#1c4aa8" strokeWidth="2.400" />
          </FilterArrow>
        </FilterBox>
        <Light>
          <svg width="14" height="21" viewBox="0 0 14 21" aria-hidden="true">
            <path d="M5 1H9V5H5Z" fill="#f48080" stroke="#a66" />
            <path d="M5 6H9V10H5Z" fill="#f3e840" stroke="#887" />
            <circle cx="7" cy="16" r="4.200" fill="#2fc768" stroke="#0b5f29" strokeWidth="1.3" />
          </svg>
        </Light>
      </StatusBar>
    </Window>
  );
}
